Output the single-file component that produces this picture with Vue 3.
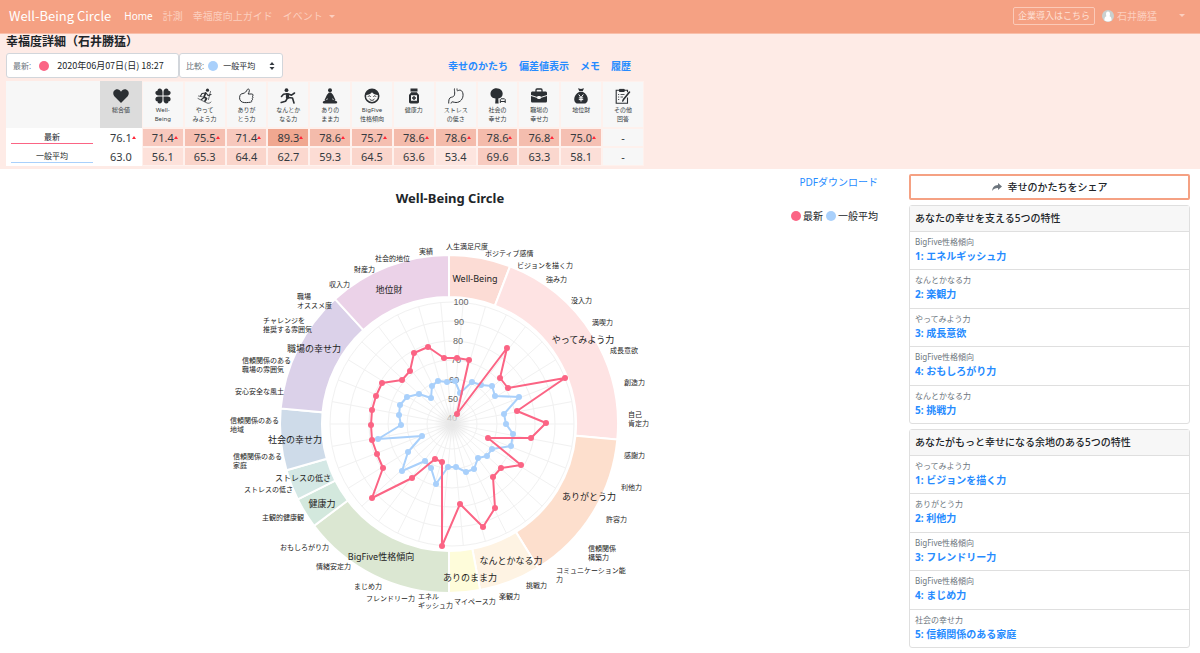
<script setup>
import { ref } from 'vue'

const menu = [
  { text: 'Home', active: true },
  { text: '計測' },
  { text: '幸福度向上ガイド' },
]
const views = ['幸せのかたち', '偏差値表示', 'メモ', '履歴']
const latest = ref('2020年06月07日(日) 18:27')
const compare = ref('一般平均')

const columns = [
  { icon: 'heart', label: ['総合値'], now: '76.1', avg: '63.0', nowBg: '#ffffff', avgBg: '#ffffff', total: true },
  { icon: 'clover', label: ['Well-', 'Being'], now: '71.4', avg: '56.1', nowBg: '#f7c8bd', avgBg: '#fde1da' },
  { icon: 'ski', label: ['やって', 'みよう力'], now: '75.5', avg: '65.3', nowBg: '#f5bfb1', avgBg: '#fad4ca' },
  { icon: 'thumb', label: ['ありが', 'とう力'], now: '71.4', avg: '64.4', nowBg: '#f7c8bd', avgBg: '#fad5cb' },
  { icon: 'run', label: ['なんとか', 'なる力'], now: '89.3', avg: '62.7', nowBg: '#f0a790', avgBg: '#fbd8cf' },
  { icon: 'yoga', label: ['ありの', 'まま力'], now: '78.6', avg: '59.3', nowBg: '#f4bbab', avgBg: '#fcdcd4' },
  { icon: 'face', label: ['BigFive', '性格傾向'], now: '75.7', avg: '64.5', nowBg: '#f5bfb1', avgBg: '#fad5cb' },
  { icon: 'bottle', label: ['健康力'], now: '78.6', avg: '63.6', nowBg: '#f4bbab', avgBg: '#fad6cd' },
  { icon: 'stomach', label: ['ストレス', 'の低さ'], now: '78.6', avg: '53.4', nowBg: '#f4bbab', avgBg: '#fde5df' },
  { icon: 'tree', label: ['社会の', '幸せ力'], now: '78.6', avg: '69.6', nowBg: '#f4bbab', avgBg: '#f8cbc0' },
  { icon: 'case', label: ['職場の', '幸せ力'], now: '76.8', avg: '63.3', nowBg: '#f4bdae', avgBg: '#fad7ce' },
  { icon: 'money', label: ['地位財'], now: '75.0', avg: '58.1', nowBg: '#f5c0b3', avgBg: '#fcdfd8' },
  { icon: 'note', label: ['その他', '回答'], now: '-', avg: '-', nowBg: '#f7f7f7', avgBg: '#f7f7f7' },
]

const cards = [
  {
    title: 'あなたの幸せを支える5つの特性',
    items: [
      ['BigFive性格傾向', 'エネルギッシュ力'],
      ['なんとかなる力', '楽観力'],
      ['やってみよう力', '成長意欲'],
      ['BigFive性格傾向', 'おもしろがり力'],
      ['なんとかなる力', '挑戦力'],
    ],
  },
  {
    title: 'あなたがもっと幸せになる余地のある5つの特性',
    items: [
      ['やってみよう力', 'ビジョンを描く力'],
      ['ありがとう力', '利他力'],
      ['BigFive性格傾向', 'フレンドリー力'],
      ['BigFive性格傾向', 'まじめ力'],
      ['社会の幸せ力', '信頼関係のある家庭'],
    ],
  },
]

// Outer ring: one sector per category, sized by its number of traits
const CX = 449
const CY = 424
const STEP = 360 / 34
const groups = [
  { text: 'Well-Being', n: 2, color: '#fcdcd5', x: 475, y: 278 },
  { text: 'やってみよう力', n: 7, color: '#fee3e3', x: 583, y: 339 },
  { text: 'ありがとう力', n: 5, color: '#fddfcd', x: 589, y: 496 },
  { text: 'なんとかなる力', n: 2, color: '#fef3e3', x: 511, y: 560 },
  { text: 'ありのまま力', n: 1, color: '#fefcda', x: 470, y: 577 },
  { text: 'BigFive性格傾向', n: 5, color: '#dbe7d2', x: 381, y: 556 },
  { text: '健康力', n: 1, color: '#d3e8dd', x: 322, y: 503 },
  { text: 'ストレスの低さ', n: 1, color: '#d4e8e5', x: 303, y: 477, small: true },
  { text: '社会の幸せ力', n: 2, color: '#cedbe9', x: 295, y: 439 },
  { text: '職場の幸せ力', n: 4, color: '#dbd1e9', x: 314, y: 348 },
  { text: '地位財', n: 4, color: '#ebd2e8', x: 389, y: 289 },
]
function polar(cx, cy, r, deg) {
  const a = (deg * Math.PI) / 180
  return `${(cx + r * Math.sin(a)).toFixed(1)} ${(cy - r * Math.cos(a)).toFixed(1)}`
}
let start = 0
const sectors = groups.map((g) => {
  const end = start + g.n * STEP
  const d = `M${polar(CX, CY, 169, start)}A169 169 0 0 1 ${polar(CX, CY, 169, end)}L${polar(CX, CY, 127, end)}A127 127 0 0 0 ${polar(CX, CY, 127, start)}Z`
  start = end
  return { ...g, d }
})

// Radar grid
const RX = 452
const RY = 424
const rings = [6, 25, 45, 64, 83, 103, 122]
const spokes = Array.from({ length: 34 }, (_, i) => `M${RX} ${RY}L${polar(RX, RY, 122, (i + 0.5) * STEP)}`).join('')
const ticks = [[100, 461, 302], [90, 459, 322], [80, 458, 341], [70, 456, 360], [60, 454, 380], [50, 453, 399], [40, 452, 418]]

const traits = [
  [446, 246, '人生満足尺度'], [485, 253, 'ポジティブ感情'], [517, 265, 'ビジョンを描く力'], [546, 279, '強み力'],
  [571, 300, '没入力'], [592, 322, '満喫力'], [610, 350, '成長意欲'], [624, 382, '創造力'],
  [628, 414, '自己', '肯定力'], [624, 455, '感謝力'], [621, 487, '利他力'], [606, 519, '許容力'],
  [588, 548, '信頼関係', '構築力'], [556, 570, 'コミュニケーション能', '力'], [526, 585, '挑戦力'], [499, 596, '楽観力'],
  [454, 601, 'マイペース力'], [418, 596, 'エネル', 'ギッシュ力'], [366, 598, 'フレンドリー力'], [354, 586, 'まじめ力'],
  [316, 566, '情緒安定力'], [280, 547, 'おもしろがり力'], [262, 517, '主観的健康観'], [244, 489, 'ストレスの低さ'],
  [233, 456, '信頼関係のある', '家庭'], [230, 420, '信頼関係のある', '地域'], [235, 391, '安心安全な風土'],
  [242, 360, '信頼関係のある', '職場の雰囲気'], [263, 320, 'チャレンジを', '推奨する雰囲気'], [297, 296, '職場', 'オススメ度'],
  [329, 284, '収入力'], [354, 269, '財産力'], [375, 258, '社会的地位'], [419, 251, '実績'],
]

const seriesNow = [
  [457, 358], [469, 360], [457, 414], [507, 348], [500, 378], [508, 388], [565, 378], [517, 411], [546, 423], [531, 438],
  [488, 438], [521, 465], [501, 468], [493, 477], [495, 508], [483, 527], [460, 504], [442, 546], [442, 462], [435, 459],
  [412, 478], [372, 498], [383, 468], [377, 454], [372, 440], [371, 425], [372, 410], [376, 396], [382, 383], [402, 380],
  [410, 371], [414, 353], [428, 347], [444, 358],
]
const seriesAvg = [
  [455, 381], [460, 393], [472, 382], [481, 385], [492, 386], [495, 396], [519, 397], [504, 414], [506, 424], [513, 434],
  [511, 446], [492, 449], [487, 456], [478, 458], [474, 469], [466, 472], [456, 467], [448, 467], [436, 484], [431, 468],
  [425, 461], [402, 471], [408, 452], [422, 436], [378, 439], [401, 425], [399, 415], [400, 405], [407, 397], [419, 394],
  [431, 398], [432, 386], [438, 381], [447, 382],
]
const series = [
  { name: '一般平均', color: '#a9d0fb', points: seriesAvg },
  { name: '最新', color: '#fb6484', points: seriesNow },
]
</script>

<template>
  <div class="page">
    <header class="navbar">
      <a href="#" class="brand">Well-Being Circle</a>
      <nav class="menu">
        <a v-for="m in menu" :key="m.text" href="#" :class="{ active: m.active }">{{ m.text }}</a>
        <button type="button" class="drop">イベント<span class="caret"></span></button>
      </nav>
      <a href="#" class="company">企業導入はこちら</a>
      <button type="button" class="user">
        <svg class="avatar" viewBox="0 0 12 12" aria-hidden="true">
          <circle cx="6" cy="6" r="6" fill="#c9d0cf" />
          <path d="M6 1.6c1.4 0 2 1.2 2 2.6 0 1-.4 1.6-.4 2C9 6.800 9.600 7.800 9.600 10.200 7.500 12 4.500 12 2.400 10.200 2.400 7.800 3 6.800 4.400 6.200c0-.4-.4-1-.4-2 0-1.400.6-2.600 2-2.600z" fill="#fff" />
        </svg>
        <span class="username">石井勝猛</span>
        <span class="caret"></span>
      </button>
    </header>

    <section class="summary">
      <h1>幸福度詳細（石井勝猛）</h1>
      <div class="toolbar">
        <div class="field wide">
          <label for="latest">最新:</label>
          <i class="dot now"></i>
          <select id="latest" v-model="latest"><option>2020年06月07日(日) 18:27</option></select>
        </div>
        <div class="field">
          <label for="compare">比較:</label>
          <i class="dot avg"></i>
          <select id="compare" v-model="compare"><option>一般平均</option></select>
          <svg class="updown" viewBox="0 0 6 8" aria-hidden="true"><path d="M3 0l2.500 3h-5zM3 8l2.500-3h-5z" fill="#343a40" /></svg>
        </div>
        <nav class="views"><a v-for="v in views" :key="v" href="#">{{ v }}</a></nav>
      </div>

      <table>
        <thead>
          <tr>
            <th class="rowname"></th>
            <th v-for="c in columns" :key="c.icon" :class="{ total: c.total }">
              <svg class="icon" viewBox="0 0 16 16" aria-hidden="true">
                <path v-if="c.icon === 'heart'" d="M8 15L1.300 8.200C-.6 6 .1 2.500 2.800 1.500 4.900.800 7 1.800 8 3.700 9 1.800 11.100.800 13.200 1.500c2.700 1 3.400 4.500 1.500 6.700z" />
                <g v-else-if="c.icon === 'clover'">
                  <path d="M7.500 7.500H3.600C1.500 7.500.2 6.200.4 4.600.5 3.400 1.400 2.700 2.500 2.700 2.500 1.400 3.300.400 4.600.400c1.700 0 2.900 1.500 2.900 3.500z" />
                  <path d="M8.500 7.500h3.900c2.100 0 3.400-1.300 3.200-2.900-.1-1.200-1-1.900-2.100-1.900 0-1.300-.8-2.300-2.100-2.300-1.700 0-2.900 1.500-2.900 3.500z" />
                  <path d="M7.500 8.500H3.600C1.500 8.500.2 9.800.4 11.400c.1 1.200 1 1.900 2.100 1.900 0 1.300.8 2.300 2.100 2.300 1.700 0 2.900-1.500 2.900-3.500z" />
                  <path d="M8.500 8.500h3.900c2.100 0 3.400 1.300 3.200 2.900-.1 1.200-1 1.900-2.100 1.900 0 1.300-.8 2.300-2.100 2.300-1.700 0-2.900-1.500-2.900-3.500z" />
                </g>
                <g v-else-if="c.icon === 'ski'" fill="none" stroke="currentColor" stroke-linecap="round" stroke-linejoin="round">
                  <circle cx="10.500" cy="2.200" r="1.600" fill="currentColor" stroke="none" />
                  <path d="M8.700 5L7 9l2.500 1.500-1.500 2.500" stroke-width="1.800" />
                  <path d="M8.500 5L5 5.500 3.500 8M9.500 5.500l1.500 2 3-1M7 9.500L4.500 11.500" stroke-width="1.100" />
                  <path d="M1 10.500l9 4.500c1.500.6 3 .2 4-1M13.500 3.500l-2 8M1.500 8l4 .8" stroke-width=".7" />
                </g>
                <path v-else-if="c.icon === 'thumb'" d="M2 7.500c.3-1.300 1.500-1.700 3-2C7 5 8.600 3.500 9.200 1.700c.4-1.100 2.200-.8 2.200.6 0 1.500-.8 2.700-1.300 3.700h3.700c1.700 0 1.700 2 .5 2.300 1 .5.800 1.900-.2 2.200.8.500.5 1.800-.5 2 .5.800 0 1.700-1 1.700-2.600.4-6 .7-8.100 0C2 13.400.9 10.500 2 7.500z" fill="none" stroke="currentColor" />
                <g v-else-if="c.icon === 'run'" fill="none" stroke="currentColor" stroke-linecap="round" stroke-linejoin="round">
                  <circle cx="6.500" cy="2.200" r="1.900" fill="currentColor" stroke="none" />
                  <path d="M7.500 6.500v3" stroke-width="3.200" />
                  <path d="M7 5.700L3.500 6.200 1.500 8.500M8.500 6l3 1.200 3-2.200M8 9.500l4.500.5 1.500 5M7.500 10L5.500 13.300l-4.300 1.200" stroke-width="1.600" />
                </g>
                <g v-else-if="c.icon === 'yoga'">
                  <circle cx="8" cy="2.200" r="2" />
                  <path d="M7 4.500h2l2 2.200L13.500 12l-1 .7L10.500 10v1.500l4.500 2c.5 1.200 0 2-1 2H2c-1 0-1.500-.8-1-2l4.500-2V10L3.500 12.700l-1-.7L5 6.700z" />
                </g>
                <g v-else-if="c.icon === 'face'">
                  <path fill-rule="evenodd" d="M8 .5a7.500 7.500 0 110 15 7.500 7.500 0 010-15zM2.200 7a5.900 5.900 0 1011.600 0C11.500 7 9.500 6 8 4.300 6.500 6 4.500 7 2.200 7z" />
                  <path d="M4 8.700c.8-1.200 1.800-1.200 2.600 0M9.400 8.700c.8-1.200 1.800-1.200 2.600 0M5.500 10.700c1.200 2.200 3.800 2.200 5 0" fill="none" stroke="currentColor" />
                </g>
                <path v-else-if="c.icon === 'bottle'" fill-rule="evenodd" d="M4.500.500h7v3h-7zM5 4.300h6c0 1.200 2 1.700 2 3v6.500c0 1-.7 1.700-1.700 1.700H4.700c-1 0-1.700-.7-1.700-1.700V7.300c0-1.300 2-1.800 2-3zM5 7.300v5.400h6V7.300zM7.300 8h1.400v1.300H10v1.400H8.700V12H7.300v-1.300H6V9.300h1.300z" />
                <path v-else-if="c.icon === 'stomach'" d="M6.500.5c-.3 2 .2 2.500.2 4.500C6.700 8.500 5 9 3 9.300 1 10 .7 12 .7 15.500M9 .5c0 1.500.2 2 .7 2.500C11.500 1.300 14.500 2 15 6c.5 4.500-2.500 8.500-7 8.500-2.500 0-4-1.500-4.700 0l-.3 1" fill="none" stroke="currentColor" />
                <g v-else-if="c.icon === 'tree'">
                  <path d="M6.500.200c4 0 6.200 2.800 6.200 5.500 0 2.500-1.800 4.500-4.400 4.800l.3 5H5.200l.3-5C2.500 10.500.5 8.500.5 5.800.5 2.800 2.800.200 6.500.200z" />
                  <path d="M10.300 15v-3.500L11 10.800h3.500l.7.700V15M10.300 13.500h5" fill="none" stroke="currentColor" />
                </g>
                <g v-else-if="c.icon === 'case'">
                  <path d="M5 4V2c0-.6.3-1 1-1h4c.7 0 1 .4 1 1v2" fill="none" stroke="currentColor" stroke-width="1.300" />
                  <path fill-rule="evenodd" d="M1.500 3.500h13c.8 0 1.500.6 1.500 1.400v2L9.600 9V8H6.400v1L0 6.900v-2c0-.8.700-1.400 1.500-1.400zM0 8l6.400 2v1h3.200v-1L16 8v5c0 1-.7 1.500-1.500 1.500h-13C.7 14.500 0 14 0 13z" />
                </g>
                <g v-else-if="c.icon === 'money'">
                  <path d="M5 .3l3 .8 3-.8L9.700 3.300H6.300zM6 4h4c2.700 1.500 4.800 4.300 4.800 7.200 0 3-1.800 4.400-4 4.400H5.200c-2.200 0-4-1.400-4-4.400C1.200 8.300 3.300 5.500 6 4z" />
                  <path d="M5.700 6.500L8 9.500l2.300-3M8 9.500v4M5.800 9.900h4.400M5.800 11.600h4.400" fill="none" stroke="#fff" />
                </g>
                <g v-else fill="none" stroke="currentColor">
                  <path d="M12.500 9.500v5.700H1.200V2.200h11.300v2" stroke-width="1.100" />
                  <path d="M4.500 3.500V1.400h4.700v2.100z" fill="currentColor" />
                  <path d="M3 6.500h1.200M3 9h1.200M3 11.500h1.200M5.500 6.500h4M5.500 9H8" stroke-width=".8" />
                  <path d="M14.500 4L8.500 11.500 7.800 13" stroke-width="1.600" stroke-linecap="round" />
                </g>
              </svg>
              <span v-for="l in c.label" :key="l" class="line">{{ l }}</span>
            </th>
          </tr>
        </thead>
        <tbody>
          <tr>
            <th class="rowname"><span class="under now">最新</span></th>
            <td v-for="c in columns" :key="c.icon" :class="{ total: c.total }" :style="{ backgroundColor: c.nowBg }">
              <span class="value">{{ c.now }}<i v-if="c.now !== '-'" class="up"></i></span>
            </td>
          </tr>
          <tr>
            <th class="rowname"><span class="under avg">一般平均</span></th>
            <td v-for="c in columns" :key="c.icon" :class="{ total: c.total }" :style="{ backgroundColor: c.avgBg }">{{ c.avg }}</td>
          </tr>
        </tbody>
      </table>
    </section>

    <main class="content">
      <section class="chart">
        <a href="#" class="pdf">PDFダウンロード</a>
        <h2>Well-Being Circle</h2>
        <div class="legend">
          <span><i class="dot now"></i>最新</span>
          <span><i class="dot avg"></i>一般平均</span>
        </div>
        <svg class="radar" viewBox="0 224 900 400" role="img" aria-label="Well-Being Circle">
          <defs>
            <radialGradient id="core">
              <stop offset="0" stop-color="#e6e6e6" />
              <stop offset="1" stop-color="#e6e6e6" stop-opacity="0" />
            </radialGradient>
          </defs>
          <path v-for="s in sectors" :key="s.text" :d="s.d" :fill="s.color" stroke="#fff" stroke-width="2" />
          <circle v-for="r in rings" :key="r" :cx="RX" :cy="RY" :r="r" fill="none" stroke="#f1f1f1" />
          <path :d="spokes" stroke="#f1f1f1" />
          <g class="ticks">
            <text v-for="t in ticks" :key="t[0]" :x="t[1]" :y="t[2]">{{ t[0] }}</text>
          </g>
          <circle :cx="RX" :cy="RY" r="18" fill="url(#core)" />
          <g v-for="s in series" :key="s.name">
            <polygon :points="s.points.join(' ')" fill="none" :stroke="s.color" stroke-width="2" stroke-linejoin="round" />
            <circle v-for="(p, i) in s.points" :key="i" :cx="p[0]" :cy="p[1]" r="3" :fill="s.color" />
          </g>
          <g class="groups">
            <text v-for="s in sectors" :key="s.text" :x="s.x" :y="s.y" :class="{ small: s.small }">{{ s.text }}</text>
          </g>
          <g class="traits">
            <text v-for="(t, i) in traits" :key="i" :y="t[1]">
              <tspan :x="t[0]">{{ t[2] }}</tspan><tspan v-if="t[3]" :x="t[0]" dy="9">{{ t[3] }}</tspan>
            </text>
          </g>
        </svg>
      </section>

      <aside class="side">
        <button type="button" class="share">
          <svg viewBox="0 0 10 8" aria-hidden="true"><path d="M6 0l4 3.500L6 7V5C3.500 4.900 1.800 5.700.2 8 .4 4.500 2.300 2.200 6 2z" fill="#6c757d" /></svg>
          幸せのかたちをシェア
        </button>
        <section v-for="card in cards" :key="card.title" class="card">
          <h3>{{ card.title }}</h3>
          <ul>
            <li v-for="(item, i) in card.items" :key="item[1]">
              <small>{{ item[0] }}</small>
              <a href="#">{{ i + 1 }}: {{ item[1] }}</a>
            </li>
          </ul>
        </section>
      </aside>
    </main>
  </div>
</template>

<style>
body {
  margin: 0;
  background: #fff;
}
</style>

<style scoped>
.page {
  font-family: "Noto Sans", "Noto Sans CJK JP", sans-serif;
  font-size: 10px;
  line-height: 14px;
  color: #212529;
}
.page *,
.page *::before {
  box-sizing: border-box;
}
a {
  color: #268bff;
  text-decoration: none;
}
button,
select {
  font: inherit;
  color: inherit;
  border: 0;
  background: none;
  padding: 0;
  margin: 0;
}
h1,
h2,
h3,
ul {
  margin: 0;
  padding: 0;
}

.navbar {
  display: flex;
  align-items: center;
  height: 34px;
  padding: 0 15px 2px 9px;
  background: #f5a183;
  border-bottom: 1px solid #f9bfaa;
}
.navbar a,
.navbar button {
  color: #fccfbf;
}
.navbar .brand {
  font-family: "Noto Sans CJK JP", sans-serif;
  color: #fff;
  font-size: 13px;
  margin-right: 13px;
}
.menu {
  display: flex;
  align-items: center;
  gap: 10px;
  margin-right: auto;
}
.navbar .active {
  color: #fff;
}
.caret {
  display: inline-block;
  border: 3px solid transparent;
  border-top-color: currentColor;
  border-bottom: 0;
}
.drop .caret {
  margin-left: 6px;
  vertical-align: 2px;
}
.navbar .company {
  border: 1px solid #fbcab8;
  border-radius: 2px;
  padding: 1px 4px;
  font-size: 9px;
  margin-right: 7px;
  color: #fee0d6;
}
.user {
  display: flex;
  align-items: center;
}
.avatar {
  width: 12px;
  height: 12px;
  margin-right: 3px;
}
.username {
  margin-right: 22px;
}

.summary {
  background: #feebe6;
  padding: 0 6px 3px;
}
h1 {
  font-size: 12px;
  line-height: 16px;
  font-weight: 700;
}
.toolbar {
  display: flex;
  align-items: center;
  max-width: 638px;
  margin: 3px 0;
  padding-right: 13px;
}
.field {
  display: flex;
  align-items: center;
  width: 104px;
  height: 25px;
  padding: 0 7px 0 6px;
  border: 1px solid #d2d6db;
  border-radius: 3px;
  background: #fff;
  font-size: 8px;
}
.field label {
  color: #6c757d;
}
.field select {
  appearance: none;
  flex: 1;
  min-width: 0;
}
.field .dot {
  margin: 0 5px 0 4px;
}
.field.wide {
  width: 173px;
}
.wide .dot {
  margin: 0 8px;
}
.field.wide select {
  font-family: "Noto Sans CJK JP", sans-serif;
  font-size: 9px;
}
.updown {
  width: 6px;
  height: 8px;
}
.dot {
  display: inline-block;
  width: 10px;
  height: 10px;
  border-radius: 50%;
  flex: none;
}
.dot.now {
  background: #fb6484;
}
.dot.avg {
  background: #a9d0fb;
}
.views {
  display: flex;
  gap: 11px;
  margin-left: auto;
  font-weight: 700;
}

table {
  width: 638px;
  table-layout: fixed;
  border-collapse: separate;
  border-spacing: 0;
}
th,
td {
  padding: 0;
  text-align: center;
  font-weight: 400;
  border: 1px solid #fef1ed;
}
.rowname {
  width: 94px;
}
thead th {
  height: 47px;
  padding-top: 6px;
  vertical-align: top;
  background: #f7f7f7;
  font-size: 6px;
  line-height: 9px;
  color: #343a40;
}
thead .rowname {
  border-color: #f7f7f7;
}
thead .total {
  background: #dcdcdc;
  border-color: #dcdcdc;
}
.line {
  display: block;
}
.icon {
  display: block;
  width: 16px;
  height: 16px;
  margin: 0 auto 2px;
  color: #2b2f33;
  fill: currentColor;
}
tbody th,
tbody td {
  height: 19px;
}
tbody th {
  background: #fff;
  border-color: #fff;
  font-size: 8px;
  line-height: 12px;
}
tbody td {
  font-size: 11px;
  line-height: 14px;
  color: #343a40;
}
tbody .total {
  border-color: #fff;
}
.under {
  display: block;
  margin: 0 6px 0 4px;
  border-bottom: 1px solid;
}
.under.now {
  border-color: #fb6484;
}
.under.avg {
  border-color: #a9d0fb;
}
.value {
  position: relative;
}
.up {
  position: absolute;
  left: 100%;
  top: 6px;
  border: 2px solid transparent;
  border-bottom: 3px solid #ff2638;
  border-top: 0;
}

.content {
  display: grid;
  grid-template-columns: 3fr 1fr;
}
.chart {
  display: flex;
  flex-direction: column;
}
.pdf {
  align-self: flex-end;
  margin: 6px 22px 0 0;
}
h2 {
  font-size: 13px;
  line-height: 18px;
  text-align: center;
}
.legend {
  display: flex;
  justify-content: flex-end;
  gap: 3px;
  margin: 2px 22px 1px 0;
}
.legend span {
  display: flex;
  align-items: center;
  gap: 2px;
}
.radar {
  display: block;
  width: 100%;
}
.radar text {
  dominant-baseline: central;
}
.ticks {
  font-family: "Liberation Sans", sans-serif;
  font-size: 9px;
  text-anchor: middle;
  fill: #666;
}
.groups {
  font-size: 9px;
  text-anchor: middle;
  fill: #222;
}
.groups .small {
  font-size: 8px;
}
.traits {
  font-size: 7px;
  fill: #222;
}

.side {
  padding: 5px 10px 5px 9px;
}
.share {
  display: flex;
  align-items: center;
  justify-content: center;
  gap: 6px;
  width: 100%;
  height: 26px;
  border: 2px solid #f5a183;
  border-radius: 2px;
  font-weight: 500;
}
.share svg {
  width: 10px;
  height: 8px;
}
.card {
  margin-top: 5px;
  border: 1px solid #dfdfdf;
  border-radius: 3px;
}
h3 {
  padding: 5px 5px 6px;
  background: #f7f7f7;
  font-size: 10px;
  line-height: 14px;
  font-weight: 500;
}
ul {
  display: grid;
  grid-auto-rows: 1fr;
  min-height: 192px;
  list-style: none;
}
li {
  padding: 3px 5px 2px;
  border-top: 1px solid #dfdfdf;
}
li small {
  display: block;
  font-size: 8px;
  line-height: 13px;
  color: #6c757d;
}
li a {
  display: block;
  line-height: 16px;
  font-weight: 700;
}
</style>
